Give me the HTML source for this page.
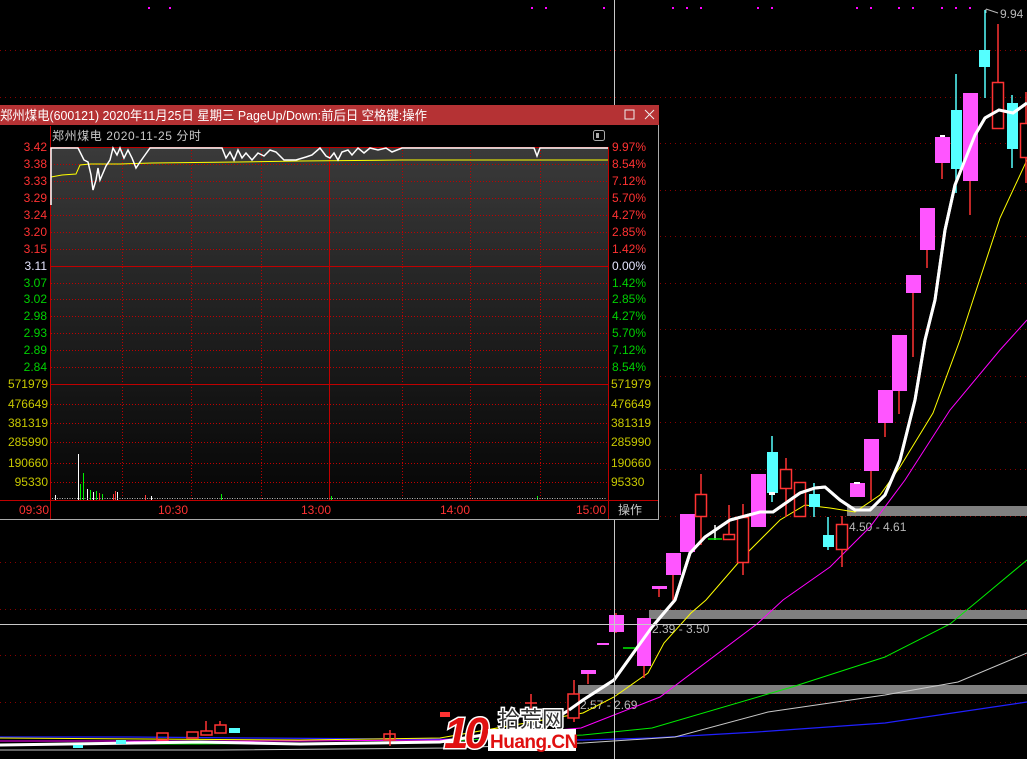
<!DOCTYPE html>
<html><head><meta charset="utf-8"><style>
html,body{margin:0;padding:0;background:#000;width:1027px;height:759px;overflow:hidden}
svg{display:block}
text{font-family:"Liberation Sans","Noto Sans CJK SC",sans-serif}
</style></head><body>
<svg width="1027" height="759" viewBox="0 0 1027 759" xmlns="http://www.w3.org/2000/svg">
<rect width="1027" height="759" fill="#000"/>
<g stroke="#8a0000" stroke-width="1" stroke-dasharray="1,4">
<line x1="0" y1="50.5" x2="1027" y2="50.5"/><line x1="0" y1="97.5" x2="1027" y2="97.5"/>
<line x1="0" y1="143.5" x2="1027" y2="143.5"/><line x1="0" y1="190.5" x2="1027" y2="190.5"/>
<line x1="0" y1="236.5" x2="1027" y2="236.5"/><line x1="0" y1="283.5" x2="1027" y2="283.5"/>
<line x1="0" y1="329.5" x2="1027" y2="329.5"/><line x1="0" y1="376.5" x2="1027" y2="376.5"/>
<line x1="0" y1="422.5" x2="1027" y2="422.5"/><line x1="0" y1="469.5" x2="1027" y2="469.5"/>
<line x1="0" y1="516.5" x2="1027" y2="516.5"/><line x1="0" y1="562.5" x2="1027" y2="562.5"/>
<line x1="0" y1="609.5" x2="1027" y2="609.5"/><line x1="0" y1="655.5" x2="1027" y2="655.5"/>
<line x1="0" y1="702.5" x2="1027" y2="702.5"/>
</g>
<g fill="#ff00ff">
<rect x="148" y="7" width="2" height="2"/><rect x="169" y="7" width="2" height="2"/>
<rect x="531" y="7" width="2" height="2"/><rect x="545" y="7" width="2" height="2"/><rect x="603" y="7" width="2" height="2"/>
<rect x="672" y="7" width="2" height="2"/><rect x="686" y="7" width="2" height="2"/><rect x="700" y="7" width="2" height="2"/>
<rect x="757" y="7" width="2" height="2"/><rect x="771" y="7" width="2" height="2"/><rect x="856" y="7" width="2" height="2"/>
<rect x="870" y="7" width="2" height="2"/><rect x="898" y="7" width="2" height="2"/><rect x="912" y="7" width="2" height="2"/>
<rect x="941" y="7" width="2" height="2"/><rect x="955" y="7" width="2" height="2"/><rect x="969" y="7" width="2" height="2"/>
</g>
<rect x="847" y="506" width="180" height="10" fill="#808080"/>
<rect x="649" y="610" width="378" height="9" fill="#808080"/>
<rect x="578" y="685" width="449" height="9" fill="#808080"/>
<g fill="#b8b8b8" font-size="12">
<text x="849" y="531">4.50 - 4.61</text>
<text x="652" y="633">2.39 - 3.50</text>
<text x="580" y="709">2.57 - 2.69</text>
<text x="1000" y="18">9.94</text>
</g>
<path d="M986 9 L986 13 M986 9 L998 13" stroke="#bbb" fill="none"/>
<polyline fill="none" stroke="#2020ff" stroke-width="1.2" points="0,737 130,737 250,738 400,739 583,740 652,738 757,732 885,723 1027,702"/>
<polyline fill="none" stroke="#c8c8c8" stroke-width="1" points="0,750 220,750 450,748 583,743 675,737 768,712 885,695 958,682 1027,653"/>
<polyline fill="none" stroke="#00ee00" stroke-width="1" points="0,744 200,744 420,742 583,735 652,728 792,687 885,657 950,624 979,600 1027,560"/>
<polyline fill="none" stroke="#ff00ff" stroke-width="1" points="0,741 300,741 440,740 581,728 614,715 660,697 757,624 783,600 830,567 870,527 905,480 950,410 1000,350 1027,320"/>
<polyline fill="none" stroke="#ffff00" stroke-width="1" points="0,738 300,740 440,738 583,713 614,697 648,673 664,643 691,613 706,600 745,555 780,520 805,505 830,508 855,512 880,495 900,467 933,413 960,340 973,300 1000,218 1027,160"/>
<polyline fill="none" stroke="#ffffff" stroke-width="3" points="0,745 200,742 300,744 440,742 545,725 569,710 583,700 614,680 652,627 675,600 690,553 705,537 730,520 760,512 773,512 800,493 815,488 825,487 840,500 855,510 870,510 885,495 900,460 915,400 925,340 935,300 945,230 955,185 965,160 975,135 985,118 999,110 1013,113 1027,103"/>
<g stroke="#ff3333" fill="none" stroke-width="1.5">
<rect x="157" y="733" width="11" height="7"/><rect x="187" y="732" width="11" height="6"/>
<rect x="201" y="731" width="11" height="4"/><rect x="215" y="725" width="11" height="8"/>
<rect x="384" y="734" width="11" height="6"/><line x1="206" y1="721" x2="206" y2="731"/><line x1="220" y1="721" x2="220" y2="725"/><line x1="390" y1="730" x2="390" y2="746"/>
<line x1="531" y1="694" x2="531" y2="710"/><line x1="525" y1="703" x2="537" y2="703"/>
</g>
<rect x="229" y="728" width="11" height="5" fill="#55ffff"/><rect x="116" y="740" width="10" height="4" fill="#55ffff"/>
<rect x="73" y="745" width="10" height="3" fill="#55ffff"/>
<rect x="440" y="712" width="10" height="5" fill="#ff3333"/>
<g stroke-width="1.5">
<line x1="574" y1="680" x2="574" y2="722" stroke="#ff3333"/><rect x="568" y="694" width="11" height="24" fill="#000" stroke="#ff3333"/>
<line x1="588" y1="672" x2="588" y2="684" stroke="#ff3333"/><rect x="581" y="670" width="15" height="4" fill="#ff55ff"/>
<rect x="597" y="643" width="12" height="2" fill="#ff55ff"/>
<line x1="616" y1="613" x2="616" y2="633" stroke="#ff3333"/><rect x="609" y="615" width="15" height="17" fill="#ff55ff"/>
<line x1="623" y1="648" x2="637" y2="648" stroke="#00ee00"/>
<line x1="644" y1="618" x2="644" y2="678" stroke="#ff3333"/><rect x="637" y="618" width="14" height="48" fill="#ff55ff"/>
<line x1="659" y1="587" x2="659" y2="597" stroke="#ff3333"/><rect x="652" y="586" width="15" height="3" fill="#ff55ff"/>
<line x1="673" y1="553" x2="673" y2="600" stroke="#ff3333"/><rect x="666" y="553" width="15" height="22" fill="#ff55ff"/>
<rect x="680" y="514" width="15" height="38" fill="#ff55ff"/>
<line x1="701" y1="474" x2="701" y2="545" stroke="#ff3333"/><rect x="695.5" y="494.5" width="11" height="22" fill="#000" stroke="#ff3333"/>
<line x1="715" y1="525" x2="715" y2="540" stroke="#fff"/><line x1="708" y1="539" x2="722" y2="539" stroke="#00ee00"/>
<line x1="729" y1="505" x2="729" y2="540" stroke="#ff3333"/><rect x="723.5" y="534.5" width="11" height="5" fill="#000" stroke="#ff3333"/>
<line x1="743" y1="504" x2="743" y2="575" stroke="#ff3333"/><rect x="737.5" y="517.5" width="11" height="45" fill="#000" stroke="#ff3333"/>
<rect x="751" y="474" width="15" height="53" fill="#ff55ff"/>
<line x1="772" y1="436" x2="772" y2="502" stroke="#55ffff"/><rect x="767" y="452" width="11" height="41" fill="#55ffff"/><rect x="769" y="492" width="6" height="3" fill="#fff"/>
<line x1="786" y1="458" x2="786" y2="517" stroke="#ff3333"/><rect x="780.5" y="469.5" width="11" height="19" fill="#000" stroke="#ff3333"/>
<rect x="794.5" y="482.5" width="11" height="34" fill="none" stroke="#ff3333"/>
<line x1="814" y1="483" x2="814" y2="517" stroke="#55ffff"/><rect x="809" y="494" width="11" height="13" fill="#55ffff"/>
<line x1="828" y1="517" x2="828" y2="550" stroke="#55ffff"/><rect x="823" y="535" width="11" height="12" fill="#55ffff"/>
<line x1="842" y1="516" x2="842" y2="567" stroke="#ff3333"/><rect x="836.5" y="524.5" width="11" height="25" fill="#000" stroke="#ff3333"/>
<rect x="850" y="483" width="15" height="14" fill="#ff55ff"/><rect x="854" y="482" width="6" height="2" fill="#fff"/>
<line x1="871" y1="439" x2="871" y2="500" stroke="#ff3333"/><rect x="864" y="439" width="15" height="32" fill="#ff55ff"/>
<line x1="885" y1="390" x2="885" y2="437" stroke="#ff3333"/><rect x="878" y="390" width="15" height="33" fill="#ff55ff"/>
<line x1="899" y1="335" x2="899" y2="414" stroke="#ff3333"/><rect x="892" y="335" width="15" height="56" fill="#ff55ff"/>
<line x1="913" y1="275" x2="913" y2="357" stroke="#ff3333"/><rect x="906" y="275" width="15" height="18" fill="#ff55ff"/>
<line x1="927" y1="208" x2="927" y2="268" stroke="#ff3333"/><rect x="920" y="208" width="15" height="42" fill="#ff55ff"/>
<line x1="942" y1="137" x2="942" y2="179" stroke="#ff3333"/><rect x="935" y="137" width="15" height="26" fill="#ff55ff"/><rect x="940" y="135" width="5" height="2" fill="#fff"/>
<line x1="956" y1="74" x2="956" y2="193" stroke="#55ffff"/><rect x="951" y="110" width="11" height="59" fill="#55ffff"/>
<line x1="970" y1="93" x2="970" y2="215" stroke="#ff3333"/><rect x="963" y="93" width="15" height="88" fill="#ff55ff"/>
<line x1="985" y1="10" x2="985" y2="98" stroke="#55ffff"/><rect x="979" y="50" width="11" height="17" fill="#55ffff"/>
<line x1="998" y1="24" x2="998" y2="82" stroke="#ff3333"/><rect x="992.5" y="82.5" width="11" height="46" fill="#000" stroke="#ff3333"/>
<line x1="1012" y1="95" x2="1012" y2="168" stroke="#55ffff"/><rect x="1007" y="103" width="11" height="46" fill="#55ffff"/>
<line x1="1026" y1="92" x2="1026" y2="183" stroke="#ff3333"/><rect x="1020.5" y="123.5" width="11" height="34" fill="#000" stroke="#ff3333"/>
</g>
<polyline fill="none" stroke="#ffffff" stroke-width="3" points="569,710 583,700 614,680 652,627 675,600 690,553 705,537 730,520 760,512 773,512 800,493 815,488 825,487 840,500 855,510 870,510 885,495 900,460 915,400 925,340 935,300 945,230 955,185 965,160 975,135 985,118 999,110 1013,113 1027,103"/>
<line x1="614.5" y1="0" x2="614.5" y2="759" stroke="#c8c8c8"/>
<line x1="0" y1="624.5" x2="1027" y2="624.5" stroke="#c8c8c8"/>
<g>
<text x="444" y="748" font-size="44" font-weight="bold" fill="#e01010" stroke="#fff" stroke-width="3" paint-order="stroke" font-style="italic" letter-spacing="-4">10</text>
<rect x="488" y="729" width="88" height="22" fill="#fff"/>
<text x="490" y="748" font-size="19" font-weight="bold" fill="#e01010" letter-spacing="-0.5">Huang.CN</text>
<text x="498" y="727" font-size="22" fill="#333" stroke="#fff" stroke-width="3" paint-order="stroke" font-family="Noto Sans CJK SC,sans-serif">拾荒网</text>
</g>
<defs><linearGradient id="bg" x1="0" y1="0" x2="0" y2="1">
<stop offset="0" stop-color="#3a3a3a"/><stop offset="0.5" stop-color="#1f1f1f"/><stop offset="1" stop-color="#060606"/></linearGradient></defs>
<rect x="0" y="105" width="659" height="415" fill="#000"/>
<rect x="0" y="105" width="659" height="20" fill="#b53234"/>
<text x="0" y="120" font-size="13" fill="#fff" textLength="427" lengthAdjust="spacingAndGlyphs">郑州煤电(600121) 2020年11月25日 星期三 PageUp/Down:前后日 空格键:操作</text>
<rect x="625" y="110" width="9" height="9" fill="none" stroke="#eee"/>
<path d="M645 110 L654 119 M654 110 L645 119" stroke="#eee" stroke-width="1"/>
<text x="52" y="140" font-size="12" fill="#c8c8c8" textLength="149" lengthAdjust="spacing">郑州煤电   2020-11-25 分时</text>
<rect x="593.5" y="130.5" width="11" height="10" rx="2" fill="none" stroke="#aaa"/><rect x="596" y="133" width="3" height="5" fill="#aaa"/>
<rect x="51" y="147" width="557" height="353" fill="url(#bg)"/>
<g stroke="#c00000" stroke-dasharray="1,2">
<line x1="51" y1="181.5" x2="608" y2="181.5"/><line x1="51" y1="198.5" x2="608" y2="198.5"/>
<line x1="51" y1="215.5" x2="608" y2="215.5"/><line x1="51" y1="232.5" x2="608" y2="232.5"/>
<line x1="51" y1="249.5" x2="608" y2="249.5"/><line x1="51" y1="283.5" x2="608" y2="283.5"/>
<line x1="51" y1="299.5" x2="608" y2="299.5"/><line x1="51" y1="316.5" x2="608" y2="316.5"/>
<line x1="51" y1="333.5" x2="608" y2="333.5"/><line x1="51" y1="350.5" x2="608" y2="350.5"/>
<line x1="51" y1="367.5" x2="608" y2="367.5"/><line x1="51" y1="404.5" x2="608" y2="404.5"/>
<line x1="51" y1="423.5" x2="608" y2="423.5"/><line x1="51" y1="442.5" x2="608" y2="442.5"/>
<line x1="51" y1="463.5" x2="608" y2="463.5"/><line x1="51" y1="482.5" x2="608" y2="482.5"/>
<line x1="51" y1="164.5" x2="608" y2="164.5"/>
<line x1="122.5" y1="147" x2="122.5" y2="500"/><line x1="191.5" y1="147" x2="191.5" y2="500"/>
<line x1="261.5" y1="147" x2="261.5" y2="500"/><line x1="402.5" y1="147" x2="402.5" y2="500"/>
<line x1="470.5" y1="147" x2="470.5" y2="500"/><line x1="540.5" y1="147" x2="540.5" y2="500"/>
</g>
<g stroke="#c00000">
<line x1="51" y1="147.5" x2="608" y2="147.5"/>
<line x1="51" y1="266.5" x2="608" y2="266.5"/><line x1="51" y1="384.5" x2="608" y2="384.5"/>
<line x1="329.5" y1="147" x2="329.5" y2="500"/>
<line x1="50.5" y1="126" x2="50.5" y2="519"/><line x1="608.5" y1="147" x2="608.5" y2="519"/>
<line x1="0" y1="500.5" x2="659" y2="500.5"/>
</g>
<line x1="0" y1="519.5" x2="659" y2="519.5" stroke="#aaa"/>
<line x1="658.5" y1="125" x2="658.5" y2="520" stroke="#aaa"/>
<g stroke-width="1">
<line x1="78.5" y1="454" x2="78.5" y2="500" stroke="#fff"/><line x1="80.5" y1="484" x2="80.5" y2="500" stroke="#0e0"/>
<line x1="83.5" y1="473" x2="83.5" y2="500" stroke="#0e0"/><line x1="87.5" y1="489" x2="87.5" y2="500" stroke="#fff"/>
<line x1="90.5" y1="490" x2="90.5" y2="500" stroke="#0e0"/><line x1="93.5" y1="492" x2="93.5" y2="500" stroke="#fff"/>
<line x1="96.5" y1="491" x2="96.5" y2="500" stroke="#0e0"/><line x1="99.5" y1="493" x2="99.5" y2="500" stroke="#f33"/>
<line x1="102.5" y1="494" x2="102.5" y2="500" stroke="#0e0"/><line x1="113.5" y1="494" x2="113.5" y2="500" stroke="#f33"/>
<line x1="115.5" y1="491" x2="115.5" y2="500" stroke="#f33"/><line x1="117.5" y1="492" x2="117.5" y2="500" stroke="#fff"/>
<line x1="221.5" y1="494" x2="221.5" y2="500" stroke="#0e0"/><line x1="537.5" y1="496" x2="537.5" y2="500" stroke="#0e0"/>
<line x1="55.5" y1="495" x2="55.5" y2="500" stroke="#fff"/><line x1="331.5" y1="496" x2="331.5" y2="500" stroke="#0e0"/>
<line x1="145.5" y1="495" x2="145.5" y2="500" stroke="#f33"/><line x1="151.5" y1="496" x2="151.5" y2="500" stroke="#fff"/>
</g>
<line x1="52" y1="498.5" x2="606" y2="498.5" stroke="#bbb" stroke-dasharray="1,1.5"/>
<polyline fill="none" stroke="#ffff00" stroke-width="1" points="51,177 62,175 76,174 80,165 90,164 120,164 152,163 238,162 300,161 402,160 608,160"/>
<polyline fill="none" stroke="#ffffff" stroke-width="1.5" points="51,205 51,148 78,148 84,160 88,162 91,175 93,190 96,180 98,168 100,180 103,173 106,166 110,160 113,148 117,155 120,148 124,158 128,150 132,158 136,168 140,162 145,155 150,148 222,148 226,158 230,152 234,160 238,150 242,158 246,153 252,160 258,153 264,156 270,150 276,152 284,160 296,160 306,157 312,155 320,148 326,156 330,158 334,153 338,160 342,152 348,150 352,155 358,148 364,153 370,148 378,150 386,148 392,152 402,148 534,148 537,156 540,148 608,148"/>
<g font-size="12" text-anchor="end">
<g fill="#ff3232">
<text x="47" y="151">3.42</text><text x="47" y="168">3.38</text><text x="47" y="185">3.33</text>
<text x="47" y="202">3.29</text><text x="47" y="219">3.24</text><text x="47" y="236">3.20</text><text x="47" y="253">3.15</text>
</g>
<text x="47" y="270" fill="#e6e6ff">3.11</text>
<g fill="#00d000">
<text x="47" y="287">3.07</text><text x="47" y="303">3.02</text><text x="47" y="320">2.98</text>
<text x="47" y="337">2.93</text><text x="47" y="354">2.89</text><text x="47" y="371">2.84</text>
</g>
<g fill="#c8c800">
<text x="48" y="388">571979</text><text x="48" y="408">476649</text><text x="48" y="427">381319</text>
<text x="48" y="446">285990</text><text x="48" y="467">190660</text><text x="48" y="486">95330</text>
</g>
</g>
<g font-size="12">
<g fill="#ff3232">
<text x="612" y="151">9.97%</text><text x="612" y="168">8.54%</text><text x="612" y="185">7.12%</text>
<text x="612" y="202">5.70%</text><text x="612" y="219">4.27%</text><text x="612" y="236">2.85%</text><text x="612" y="253">1.42%</text>
</g>
<text x="612" y="270" fill="#e6e6ff">0.00%</text>
<g fill="#00d000">
<text x="612" y="287">1.42%</text><text x="612" y="303">2.85%</text><text x="612" y="320">4.27%</text>
<text x="612" y="337">5.70%</text><text x="612" y="354">7.12%</text><text x="612" y="371">8.54%</text>
</g>
<g fill="#c8c800">
<text x="611" y="388">571979</text><text x="611" y="408">476649</text><text x="611" y="427">381319</text>
<text x="611" y="446">285990</text><text x="611" y="467">190660</text><text x="611" y="486">95330</text>
</g>
<g fill="#ff3232">
<text x="19" y="514">09:30</text><text x="158" y="514">10:30</text><text x="301" y="514">13:00</text>
<text x="440" y="514">14:00</text><text x="576" y="514">15:00</text>
</g>
<text x="618" y="514" fill="#c8c8c8">操作</text>
</g>
</svg>
</body></html>
